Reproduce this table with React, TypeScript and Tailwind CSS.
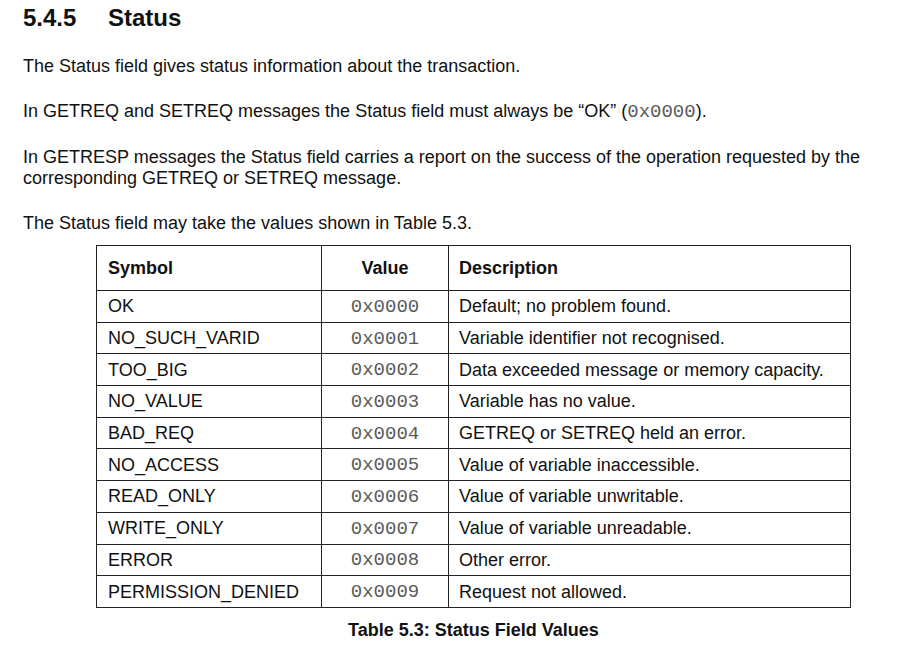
import React from 'react';

const rows: [string, string, string][] = [
  ['OK', '0x0000', 'Default; no problem found.'],
  ['NO_SUCH_VARID', '0x0001', 'Variable identifier not recognised.'],
  ['TOO_BIG', '0x0002', 'Data exceeded message or memory capacity.'],
  ['NO_VALUE', '0x0003', 'Variable has no value.'],
  ['BAD_REQ', '0x0004', 'GETREQ or SETREQ held an error.'],
  ['NO_ACCESS', '0x0005', 'Value of variable inaccessible.'],
  ['READ_ONLY', '0x0006', 'Value of variable unwritable.'],
  ['WRITE_ONLY', '0x0007', 'Value of variable unreadable.'],
  ['ERROR', '0x0008', 'Other error.'],
  ['PERMISSION_DENIED', '0x0009', 'Request not allowed.'],
];

const Code: React.FC<{ children: React.ReactNode }> = ({ children }) => (
  <span className="font-['Liberation_Mono',monospace] text-[19px] text-[#5a5a5a]">{children}</span>
);

const App: React.FC = () => {
  return (
    <div className="w-[897px] h-[654px] bg-white text-[#111] font-['Liberation_Sans',Arial,sans-serif] text-[18px] leading-[21px] pl-[23px] pt-[5px] overflow-hidden">
      {/* Heading */}
      <h2 className="flex text-[24px] leading-[26px] font-bold">
        <span className="w-[85px]">5.4.5</span>
        <span>Status</span>
      </h2>

      <div className="mt-[25px] space-y-[24px] pr-[20px]">
        <p>The Status field gives status information about the transaction.</p>
        <p>
          In GETREQ and SETREQ messages the Status field must always be “OK” (<Code>0x0000</Code>).
        </p>
        <p>
          In GETRESP messages the Status field carries a report on the success of the operation requested by the
          corresponding GETREQ or SETREQ message.
        </p>
        <p>The Status field may take the values shown in Table 5.3.</p>
      </div>

      {/* Table */}
      <div className="ml-[73px] mt-[11px] w-[755px]">
        <table className="w-full border-collapse border border-[#222]">
          <thead>
            <tr className="h-[45px]">
              <th className="w-[225px] border border-[#222] px-[11px] pt-[1px] text-left font-bold">Symbol</th>
              <th className="w-[127px] border border-[#222] pt-[1px] text-center font-bold">Value</th>
              <th className="border border-[#222] px-[10px] pt-[1px] text-left font-bold">Description</th>
            </tr>
          </thead>
          <tbody>
            {rows.map(([sym, val, desc]) => (
              <tr key={sym} className="h-[31.7px]">
                <td className="border border-[#222] px-[11px] pt-[1px]">{sym}</td>
                <td className="border border-[#222] pt-[1px] text-center"><Code>{val}</Code></td>
                <td className="border border-[#222] px-[10px] pt-[1px]">{desc}</td>
              </tr>
            ))}
          </tbody>
        </table>
        <p className="mt-[12px] text-center font-bold">Table 5.3: Status Field Values</p>
      </div>
    </div>
  );
};

export default App;
